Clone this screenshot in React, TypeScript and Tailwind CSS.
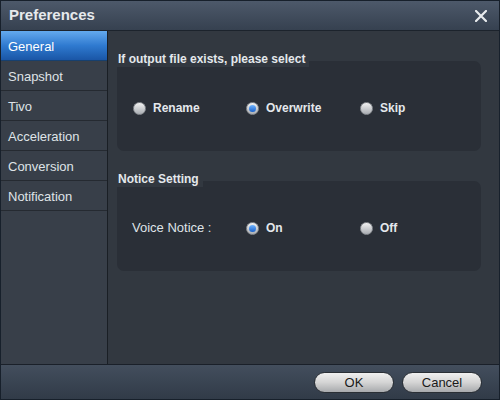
import React, { useState } from 'react';

const Radio: React.FC<{ checked: boolean; label: string; onClick: () => void }> = ({ checked, label, onClick }) => (
  <button onClick={onClick} className="flex items-center gap-[7px] text-[12px] font-bold text-[#e4e8ec]">
    <span className="w-[13px] h-[13px] rounded-full border border-[#8a8e93] bg-gradient-to-b from-[#f2f2f2] to-[#a9adb2] flex items-center justify-center">
      {checked && <span className="w-[7px] h-[7px] rounded-full bg-gradient-to-b from-[#6fb4ff] to-[#1860c8]" />}
    </span>
    {label}
  </button>
);

const TABS = ['General', 'Snapshot', 'Tivo', 'Acceleration', 'Conversion', 'Notification'];

export default function App() {
  const [tab, setTab] = useState('General');
  const [exists, setExists] = useState('Overwrite');
  const [voice, setVoice] = useState('On');

  return (
    <div className="w-[500px] h-[400px] flex flex-col border border-[#17202b] bg-[#323840] overflow-hidden" style={{ fontFamily: '"Liberation Sans", Arial, sans-serif' }}>
      <div className="h-[30px] shrink-0 flex items-center justify-between pl-[8px] pr-[12px] bg-gradient-to-b from-[#4d596a] to-[#364150] border-b border-[#1c232c]">
        <span className="text-[15px] font-bold text-[#e6e9ec]">Preferences</span>
        <svg width="12" height="12" viewBox="0 0 12 12" className="text-[#e8ebee]">
          <path d="M1 1 L11 11 M11 1 L1 11" stroke="currentColor" strokeWidth="2.2" strokeLinecap="square" />
        </svg>
      </div>
      <div className="flex-1 flex min-h-0">
        <div className="w-[107px] shrink-0 bg-[#383f49] border-r border-[#1a1f25] flex flex-col">
          {TABS.map(t => (
            <button
              key={t}
              onClick={() => setTab(t)}
              className={`h-[30px] shrink-0 text-left pl-[7px] pt-[2px] text-[13px] border-b ${
                tab === t
                  ? 'bg-gradient-to-b from-[#64aaee] via-[#2f7ad0] to-[#1a56a6] text-white border-[#17406e]'
                  : 'text-[#dfe3e7] border-[#252a31]'
              }`}
            >
              {t}
            </button>
          ))}
        </div>
        <div className="flex-1 pl-[9px] pr-[18px] pt-[20px] flex flex-col gap-[20px]">
          <div className="flex flex-col">
            <div className="h-[10px] flex">
              <div className="w-[192px] bg-[#323840] px-[1px] text-[12px] font-bold text-[#e4e8ec] leading-[16px] relative z-10 h-[16px]">If output file exists, please select</div>
            </div>
            <div className="h-[90px] rounded-[7px] bg-[#2a2f37] flex items-center pl-[16px] pt-[4px]">
              <div className="w-[113px]"><Radio checked={exists === 'Rename'} label="Rename" onClick={() => setExists('Rename')} /></div>
              <div className="w-[114px]"><Radio checked={exists === 'Overwrite'} label="Overwrite" onClick={() => setExists('Overwrite')} /></div>
              <Radio checked={exists === 'Skip'} label="Skip" onClick={() => setExists('Skip')} />
            </div>
          </div>
          <div className="flex flex-col">
            <div className="h-[10px] flex">
              <div className="w-[86px] bg-[#323840] px-[1px] text-[12px] font-bold text-[#e4e8ec] leading-[16px] relative z-10 h-[16px]">Notice Setting</div>
            </div>
            <div className="h-[90px] rounded-[7px] bg-[#2a2f37] flex items-center pl-[15px] pt-[4px]">
              <div className="w-[114px] text-[13px] text-[#dfe3e7]">Voice Notice :</div>
              <div className="w-[114px]"><Radio checked={voice === 'On'} label="On" onClick={() => setVoice('On')} /></div>
              <Radio checked={voice === 'Off'} label="Off" onClick={() => setVoice('Off')} />
            </div>
          </div>
        </div>
      </div>
      <div className="h-[35px] shrink-0 bg-gradient-to-b from-[#434e5d] to-[#313b48] border-t border-[#1a2029] flex items-center justify-end gap-[8px] pr-[17px]">
        <button className="w-[80px] h-[21px] rounded-full border border-[#2a2f35] bg-gradient-to-b from-[#f0f0f0] via-[#d4d4d4] to-[#a8aaad] text-[13px] text-[#1a1a1a]">OK</button>
        <button className="w-[80px] h-[21px] rounded-full border border-[#2a2f35] bg-gradient-to-b from-[#f0f0f0] via-[#d4d4d4] to-[#a8aaad] text-[13px] text-[#1a1a1a]">Cancel</button>
      </div>
    </div>
  );
}
